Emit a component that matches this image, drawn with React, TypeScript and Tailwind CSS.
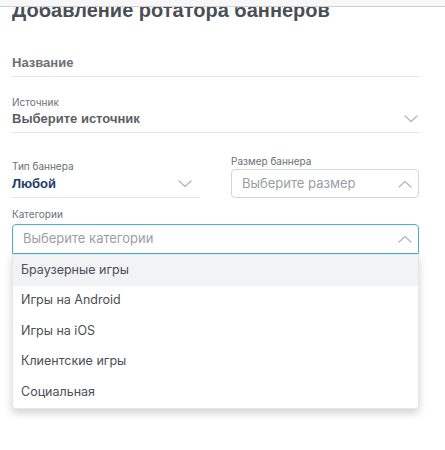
import React from 'react';

const sans = "font-['Inter','Liberation_Sans',sans-serif]";
const arial = "font-['Liberation_Sans','Arial',sans-serif]";

function Chevron({ up = false, className = '' }: { up?: boolean; className?: string }) {
  return (
    <svg width="14" height="8" viewBox="0 0 14 8" className={className} fill="none">
      <path
        d={up ? 'M1 7L7 1.5L13 7' : 'M1 1L7 6.5L13 1'}
        stroke="#b5b9bf"
        strokeWidth="1.4"
        strokeLinecap="round"
        strokeLinejoin="round"
      />
    </svg>
  );
}

const categories = ['Браузерные игры', 'Игры на Android', 'Игры на iOS', 'Клиентские игры', 'Социальная'];

export default function App() {
  return (
    <div className={`relative w-[445px] h-[450px] overflow-hidden bg-white ${sans}`}>
      <div className="absolute left-0 top-0 w-full h-[7px] bg-[#f7f7f8] border-b border-[#cfd1d4] z-10" />

      <div className="pl-3 pr-[26px]">
        <h1 className={`${arial} mt-[-2px] text-[20px] leading-[24px] font-bold text-[#4a4f55]`}>
          Добавление ротатора баннеров
        </h1>

        <div className="mt-[33px] border-b border-[#e3e5e8] pb-[5px]">
          <div className={`${arial} text-[13px] leading-[16px] font-bold text-[#6b7077]`}>Название</div>
        </div>

        <div className="mt-[19px] border-b border-[#e3e5e8] pb-[5px]">
          <div className="text-[10px] leading-[13px] text-[#6b7077]">Источник</div>
          <div className="mt-[2px] flex items-center justify-between">
            <span className={`${arial} text-[13px] leading-[16px] font-bold text-[#5a5f66]`}>Выберите источник</span>
            <Chevron className="mr-[1px]" />
          </div>
        </div>

        <div className="mt-[22px] flex items-end gap-[31px]">
          <div className="w-[188px] border-b border-[#e3e5e8] pb-[5px]">
            <div className="text-[10px] leading-[13px] text-[#6b7077]">Тип баннера</div>
            <div className="mt-[3px] flex items-center justify-between">
              <span className={`${arial} text-[13px] leading-[16px] font-bold text-[#1e3a6b]`}>Любой</span>
              <Chevron className="mr-[8px]" />
            </div>
          </div>
          <div className="flex-1">
            <div className="text-[10px] leading-[13px] text-[#6b7077]">Размер баннера</div>
            <div className="mt-[1px] h-[29px] flex items-center justify-between rounded-[4px] border border-[#d3d6da] pl-[10px] pr-[6px]">
              <span className="text-[13px] text-[#9a9ea4]">Выберите размер</span>
              <Chevron up />
            </div>
          </div>
        </div>

        <div className="mt-[10px]">
          <div className="text-[10px] leading-[13px] text-[#6b7077]">Категории</div>
          <div className="mt-[3px] h-[30px] flex items-center justify-between rounded-t-[4px] border border-[#3fb5c9] pl-[10px] pr-[6px]">
            <span className="text-[13px] text-[#9a9ea4]">Выберите категории</span>
            <Chevron up />
          </div>
          <div className="bg-white rounded-b-[4px] shadow-[0_4px_8px_rgba(0,0,0,0.18)] border border-[#e6e7e9]">
            {categories.map((c, i) => (
              <div
                key={c}
                className={`h-[30.5px] flex items-center pl-[8px] text-[12.5px] text-[#4a4f55] ${i === 0 ? 'bg-[#f2f3f5]' : ''}`}
              >
                {c}
              </div>
            ))}
          </div>
        </div>
      </div>
    </div>
  );
}
